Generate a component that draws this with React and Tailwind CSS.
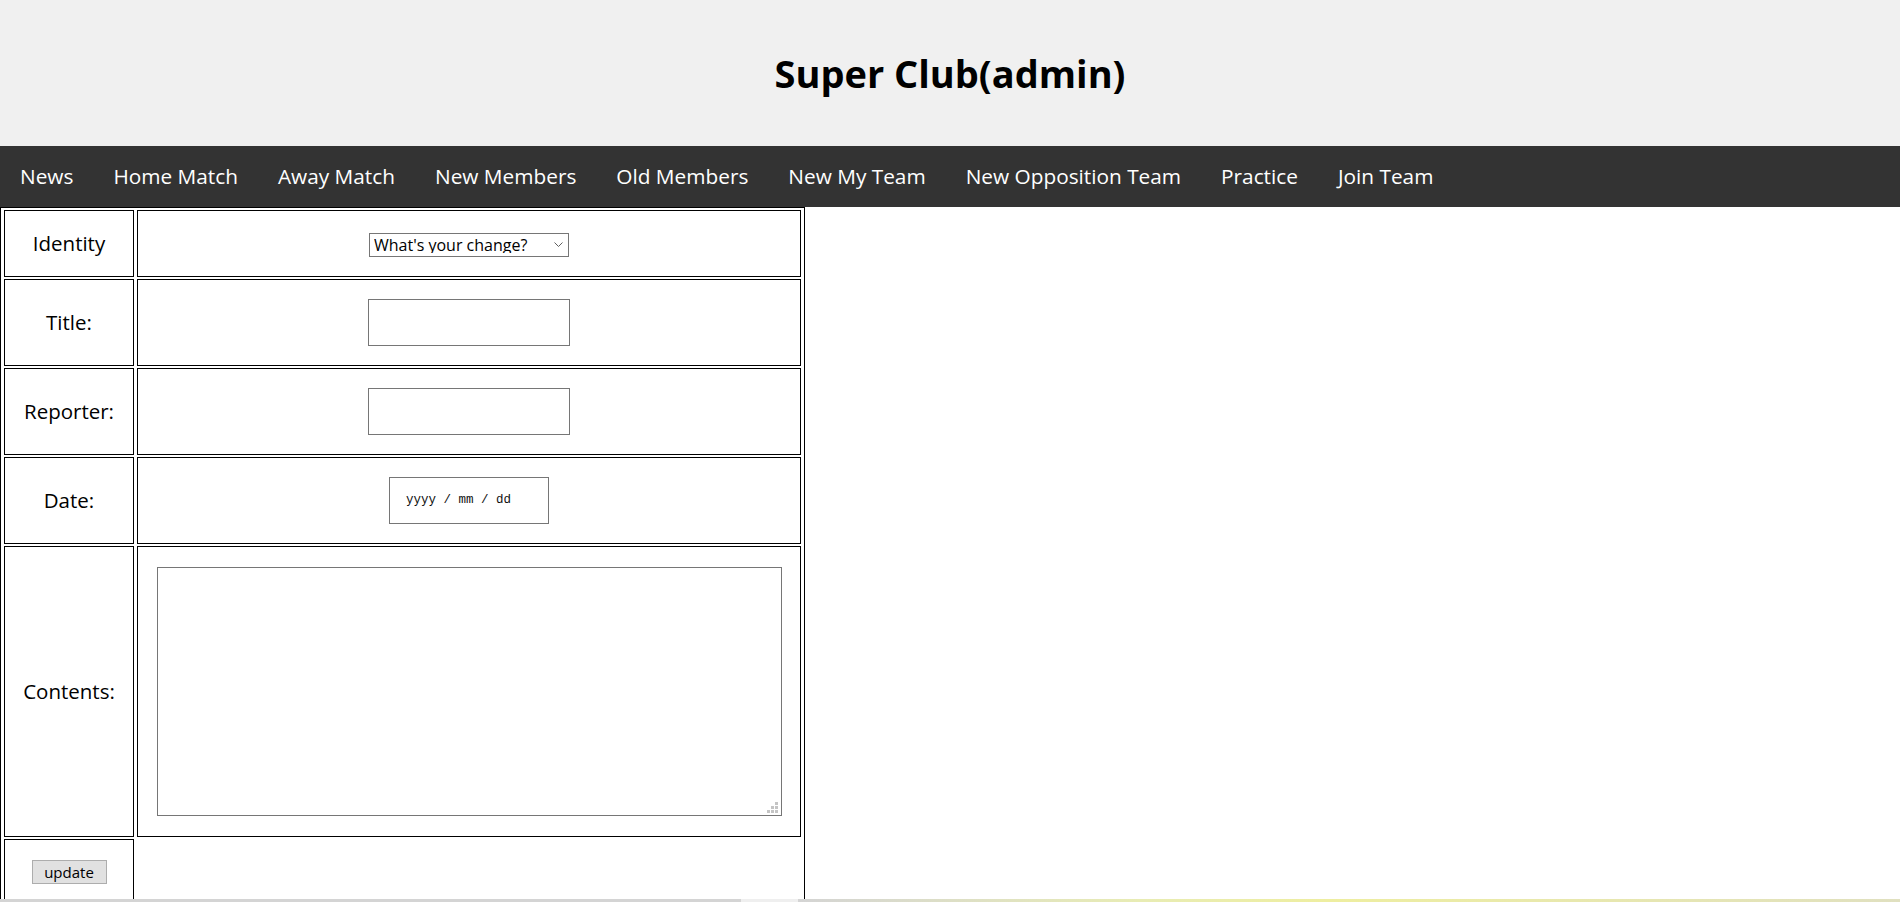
import { useState } from "react";

const navItems = [
  "News",
  "Home Match",
  "Away Match",
  "New Members",
  "Old Members",
  "New My Team",
  "New Opposition Team",
  "Practice",
  "Join Team",
];

const App = () => {
  const [form, setForm] = useState({ identity: "", title: "", reporter: "", contents: "" });

  const update = (key) => (e) => setForm({ ...form, [key]: e.target.value });

  return (
    <div className="min-h-screen bg-white font-['Open_Sans',sans-serif] text-black">
      {/* header */}
      <header className="h-[146px] bg-[#f0f0f0] flex items-center justify-center">
        <h1 className="text-[38px] font-bold leading-none">Super Club(admin)</h1>
      </header>

      {/* nav bar */}
      <nav className="h-[61px] bg-[#333333] flex items-center">
        {navItems.map((item) => (
          <a key={item} href="#" className="px-[20px] text-[20.8px] text-white leading-none">
            {item}
          </a>
        ))}
      </nav>

      {/* form table */}
      <table className="table-fixed w-[805px] border border-black border-separate border-spacing-x-[3px] border-spacing-y-[2px] text-[20.5px]">
        <tbody>
          <tr>
            <td className="w-[130px] h-[67px] border border-black text-center align-middle">Identity</td>
            <td className="w-[664px] h-[67px] border border-black align-middle">
              <div className="flex justify-center pt-[2px]">
                <div className="relative w-[200px] h-[24px]">
                  <select
                    value={form.identity}
                    onChange={update("identity")}
                    className="block appearance-none w-full h-full border border-[#767676] bg-white pl-[4px] text-[16px] leading-none outline-none"
                  >
                    <option value="">What's your change?</option>
                    <option value="news">News</option>
                    <option value="match">Match</option>
                  </select>
                  <svg
                    className="absolute right-[6px] top-[9px] pointer-events-none"
                    width="9"
                    height="6"
                    viewBox="0 0 9 6"
                  >
                    <path d="M0.5 0.5 L4.5 4.5 L8.5 0.5" fill="none" stroke="#5f5f5f" strokeWidth="1" />
                  </svg>
                </div>
              </div>
            </td>
          </tr>
          <tr>
            <td className="h-[87px] border border-black text-center align-middle">Title:</td>
            <td className="h-[87px] border border-black align-middle">
              <div className="flex justify-center">
                <input
                  type="text"
                  value={form.title}
                  onChange={update("title")}
                  className="block w-[202px] h-[47px] border border-[#767676] bg-white px-2 outline-none"
                />
              </div>
            </td>
          </tr>
          <tr>
            <td className="h-[87px] border border-black text-center align-middle">Reporter:</td>
            <td className="h-[87px] border border-black align-middle">
              <div className="flex justify-center">
                <input
                  type="text"
                  value={form.reporter}
                  onChange={update("reporter")}
                  className="block w-[202px] h-[47px] border border-[#767676] bg-white px-2 outline-none"
                />
              </div>
            </td>
          </tr>
          <tr>
            <td className="h-[87px] border border-black text-center align-middle">Date:</td>
            <td className="h-[87px] border border-black align-middle">
              <div className="flex justify-center">
                <div className="w-[160px] h-[47px] border border-[#767676] bg-white flex items-center pl-[16px] font-['Liberation_Mono',monospace] text-[12.5px] text-[#111]">
                  yyyy / mm / dd
                </div>
              </div>
            </td>
          </tr>
          <tr>
            <td className="h-[291px] border border-black text-center align-middle">Contents:</td>
            <td className="h-[291px] border border-black align-middle">
              <div className="flex justify-center">
                <div className="relative">
                  <textarea
                    value={form.contents}
                    onChange={update("contents")}
                    className="block w-[625px] h-[249px] border border-[#767676] bg-white resize-none outline-none"
                  />
                  {/* resize grip */}
                  <svg className="absolute right-[4px] bottom-[3px]" width="11" height="11" viewBox="0 0 11 11">
                    <rect x="8" y="0" width="3" height="3" fill="#c4c4c4" />
                    <rect x="4" y="4" width="3" height="3" fill="#c4c4c4" />
                    <rect x="8" y="4" width="3" height="3" fill="#c4c4c4" />
                    <rect x="0" y="8" width="3" height="3" fill="#c4c4c4" />
                    <rect x="4" y="8" width="3" height="3" fill="#c4c4c4" />
                    <rect x="8" y="8" width="3" height="3" fill="#c4c4c4" />
                  </svg>
                </div>
              </div>
            </td>
          </tr>
          <tr>
            <td className="h-[66px] border border-black align-middle">
              <div className="flex justify-center">
                <button className="w-[75px] h-[24px] bg-[#e1e1e1] border border-[#adadad] text-[15px] leading-none">
                  update
                </button>
              </div>
            </td>
          </tr>
        </tbody>
      </table>

      {/* thin strip at the bottom edge of the window */}
      <div className="fixed left-0 right-0 bottom-0 h-[3px] bg-[linear-gradient(90deg,#d4d4d4_0%,#d4d4d4_39%,#efefef_39%,#efefef_42%,#d4d4d4_42%,#e8ecb4_60%,#eeeea0_70%,#e0e0c0_100%)]" />
    </div>
  );
};

export default App;
